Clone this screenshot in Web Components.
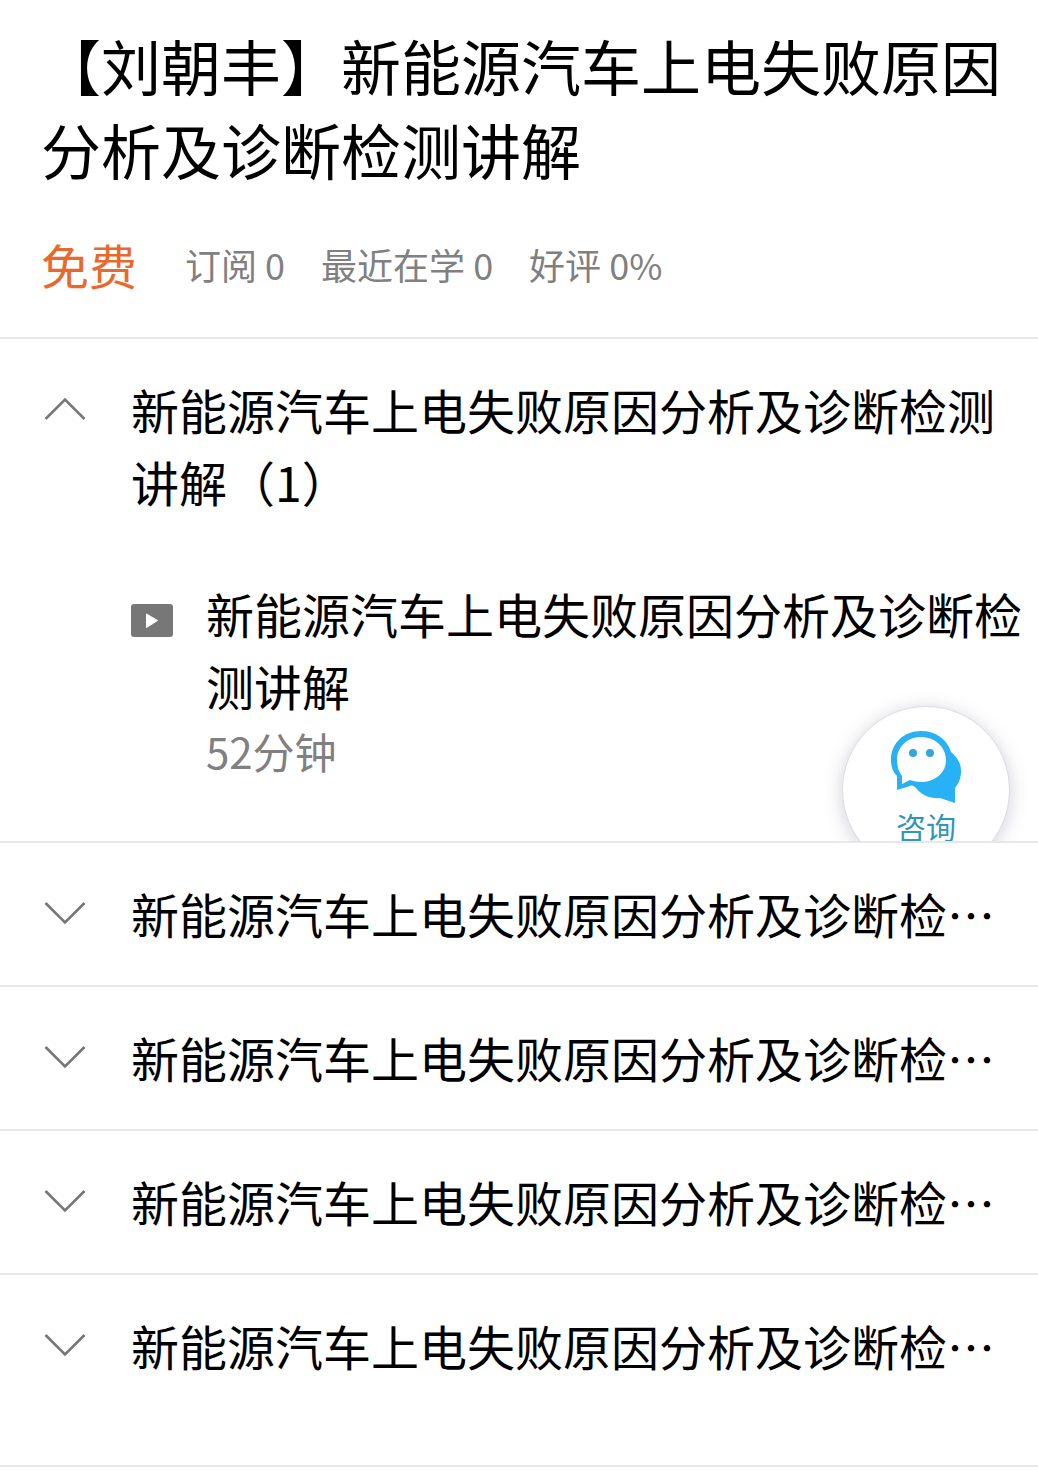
<!DOCTYPE html>
<html lang="zh-CN">
<head>
<meta charset="utf-8">
<meta name="viewport" content="width=device-width, initial-scale=1">
<title>新能源汽车上电失败原因分析及诊断检测讲解</title>
<style>
  body {
    margin: 0;
    background: #fff;
    color: #000;
    font-family: "Noto Sans CJK SC", sans-serif;
  }
</style>
</head>
<body>
<course-page>
  <course-header price="免费">
    【刘朝丰】新能源汽车上电失败原因分析及诊断检测讲解
    <course-stat slot="stats" label="订阅" value="0"></course-stat>
    <course-stat slot="stats" label="最近在学" value="0"></course-stat>
    <course-stat slot="stats" label="好评" value="0%"></course-stat>
  </course-header>
  <course-chapter open>
    <span slot="title">新能源汽车上电失败原因分析及诊断检测讲解（1）</span>
    <course-lesson>
      新能源汽车上电失败原因分析及诊断检测讲解
      <span slot="duration">52分钟</span>
    </course-lesson>
    <chat-button>咨询</chat-button>
  </course-chapter>
  <course-chapter><span slot="title">新能源汽车上电失败原因分析及诊断检…</span></course-chapter>
  <course-chapter><span slot="title">新能源汽车上电失败原因分析及诊断检…</span></course-chapter>
  <course-chapter><span slot="title">新能源汽车上电失败原因分析及诊断检…</span></course-chapter>
  <course-chapter><span slot="title">新能源汽车上电失败原因分析及诊断检…</span></course-chapter>
</course-page>

<script>
class BaseElement extends HTMLElement {

  constructor() {
    super();
    this.attachShadow({ mode: 'open' });
    const template = document.createElement('template');
    template.innerHTML = this.constructor.template(this);
    this.shadowRoot.appendChild(template.content.cloneNode(true));
  }
}

class CoursePage extends BaseElement {

  static template() {
    return `
      <style>
        :host {
          display: flex;
          flex-direction: column;
        }
        ::slotted(course-chapter:last-of-type) {
          padding-bottom: 48px;
        }
      </style>
      <slot></slot>
    `;
  }
}

class CourseHeader extends BaseElement {

  static template(el) {
    return `
      <style>
        :host {
          display: block;
          padding: 23px 36px 37px 41px;
          border-bottom: 2px solid #e8e8e8;
        }
        h1 {
          margin: 0;
          font-size: 60px;
          font-weight: 400;
          line-height: 84px;
          text-spacing-trim: space-all;
        }
        .meta {
          display: flex;
          align-items: center;
          gap: 48px;
          margin-top: 37px;
          line-height: 72px;
        }
        .price {
          color: #e8692c;
          font-size: 48px;
        }
        .stats {
          display: flex;
          gap: 36px;
        }
      </style>
      <h1><slot></slot></h1>
      <div class="meta">
        <span class="price">${el.getAttribute('price')}</span>
        <div class="stats"><slot name="stats"></slot></div>
      </div>
    `;
  }
}

class CourseStat extends BaseElement {

  static template(el) {
    return `
      <style>
        :host {
          display: block;
          color: #808080;
          font-size: 36px;
          white-space: nowrap;
        }
      </style>
      <span>${el.getAttribute('label')} ${el.getAttribute('value')}</span>
    `;
  }
}

class CourseChapter extends BaseElement {

  static template(el) {
    const open = el.hasAttribute('open');
    return `
      <style>
        :host {
          display: block;
          position: relative;
          overflow: hidden;
          border-bottom: 2px solid #e8e8e8;
        }
        button {
          display: flex;
          align-items: flex-start;
          gap: 45px;
          width: 100%;
          padding: 34px 42px 36px 44px;
          border: 0;
          background: none;
          color: inherit;
          font: inherit;
          font-size: 48px;
          line-height: 72px;
          text-align: left;
          cursor: pointer;
        }
        svg {
          flex: none;
          margin-top: 24px;
        }
        :host([open]) svg {
          transform: scaleY(-1);
        }
        .lessons {
          padding: 24px 12px 60px 131px;
        }
        :host(:not([open])) .lessons {
          display: none;
        }
      </style>
      <button type="button" aria-expanded="${open}">
        <svg width="42" height="24" viewBox="0 0 42 24" fill="none" stroke="#777" stroke-width="2.6" aria-hidden="true">
          <path d="M1.500 2 21 21.500 40.500 2"/>
        </svg>
        <slot name="title"></slot>
      </button>
      <div class="lessons"><slot></slot></div>
    `;
  }

  connectedCallback() {
    const button = this.shadowRoot.querySelector('button');
    button.addEventListener('click', () => {
      button.setAttribute('aria-expanded', this.toggleAttribute('open'));
    });
  }
}

class CourseLesson extends BaseElement {

  static template() {
    return `
      <style>
        :host {
          display: flex;
          align-items: flex-start;
          gap: 33px;
        }
        svg {
          flex: none;
          margin-top: 27px;
        }
        .title {
          font-size: 48px;
          line-height: 72px;
        }
        .duration {
          color: #808080;
          font-size: 42px;
          line-height: 60px;
        }
      </style>
      <svg width="42" height="33" viewBox="0 0 42 33" aria-hidden="true">
        <rect width="42" height="33" rx="3" fill="#777"/>
        <path d="M15.5 10v13.500l11-7z" fill="#fff" stroke="#fff" stroke-linejoin="round"/>
      </svg>
      <div>
        <div class="title"><slot></slot></div>
        <div class="duration"><slot name="duration"></slot></div>
      </div>
    `;
  }
}

class ChatButton extends BaseElement {

  static template() {
    return `
      <style>
        /* floats over the lesson list, cut off by the chapter's edge */
        :host {
          position: absolute;
          right: 28px;
          bottom: -33px;
        }
        button {
          display: flex;
          flex-direction: column;
          align-items: center;
          box-sizing: border-box;
          width: 168px;
          height: 168px;
          padding: 24px 0 0;
          border: 1px solid #dcdce2;
          border-radius: 50%;
          background: #fff;
          box-shadow: 0 3px 18px rgba(70, 70, 110, .25);
          color: #3295bd;
          font: inherit;
          font-size: 30px;
          line-height: 42px;
          cursor: pointer;
        }
      </style>
      <button type="button">
        <svg width="72" height="74" viewBox="0 0 72 74" aria-hidden="true">
          <path fill="#29b1f5" d="M31 0C46 0 57 8 61 21c6 5 10 11 10 19 0 7-2 12-6 17v15l-15-5c-8 1-18-2-24-10-2-2-4-3-6-2L7 59V45C3 41 1 36 1 29 1 12 14 0 31 0z"/>
          <path fill="#fff" d="M31 6c14 0 25 10 25 23S45 51 31 51c-4 0-7-1-11-2l-8 4v-8c-3-4-5-9-5-16C7 16 17 6 31 6z"/>
          <circle cx="23" cy="22" r="4" fill="#35a6dd"/>
          <circle cx="40" cy="22" r="4" fill="#35a6dd"/>
        </svg>
        <slot></slot>
      </button>
    `;
  }
}

customElements.define('course-page', CoursePage);
customElements.define('course-header', CourseHeader);
customElements.define('course-stat', CourseStat);
customElements.define('course-chapter', CourseChapter);
customElements.define('course-lesson', CourseLesson);
customElements.define('chat-button', ChatButton);
</script>
</body>
</html>
